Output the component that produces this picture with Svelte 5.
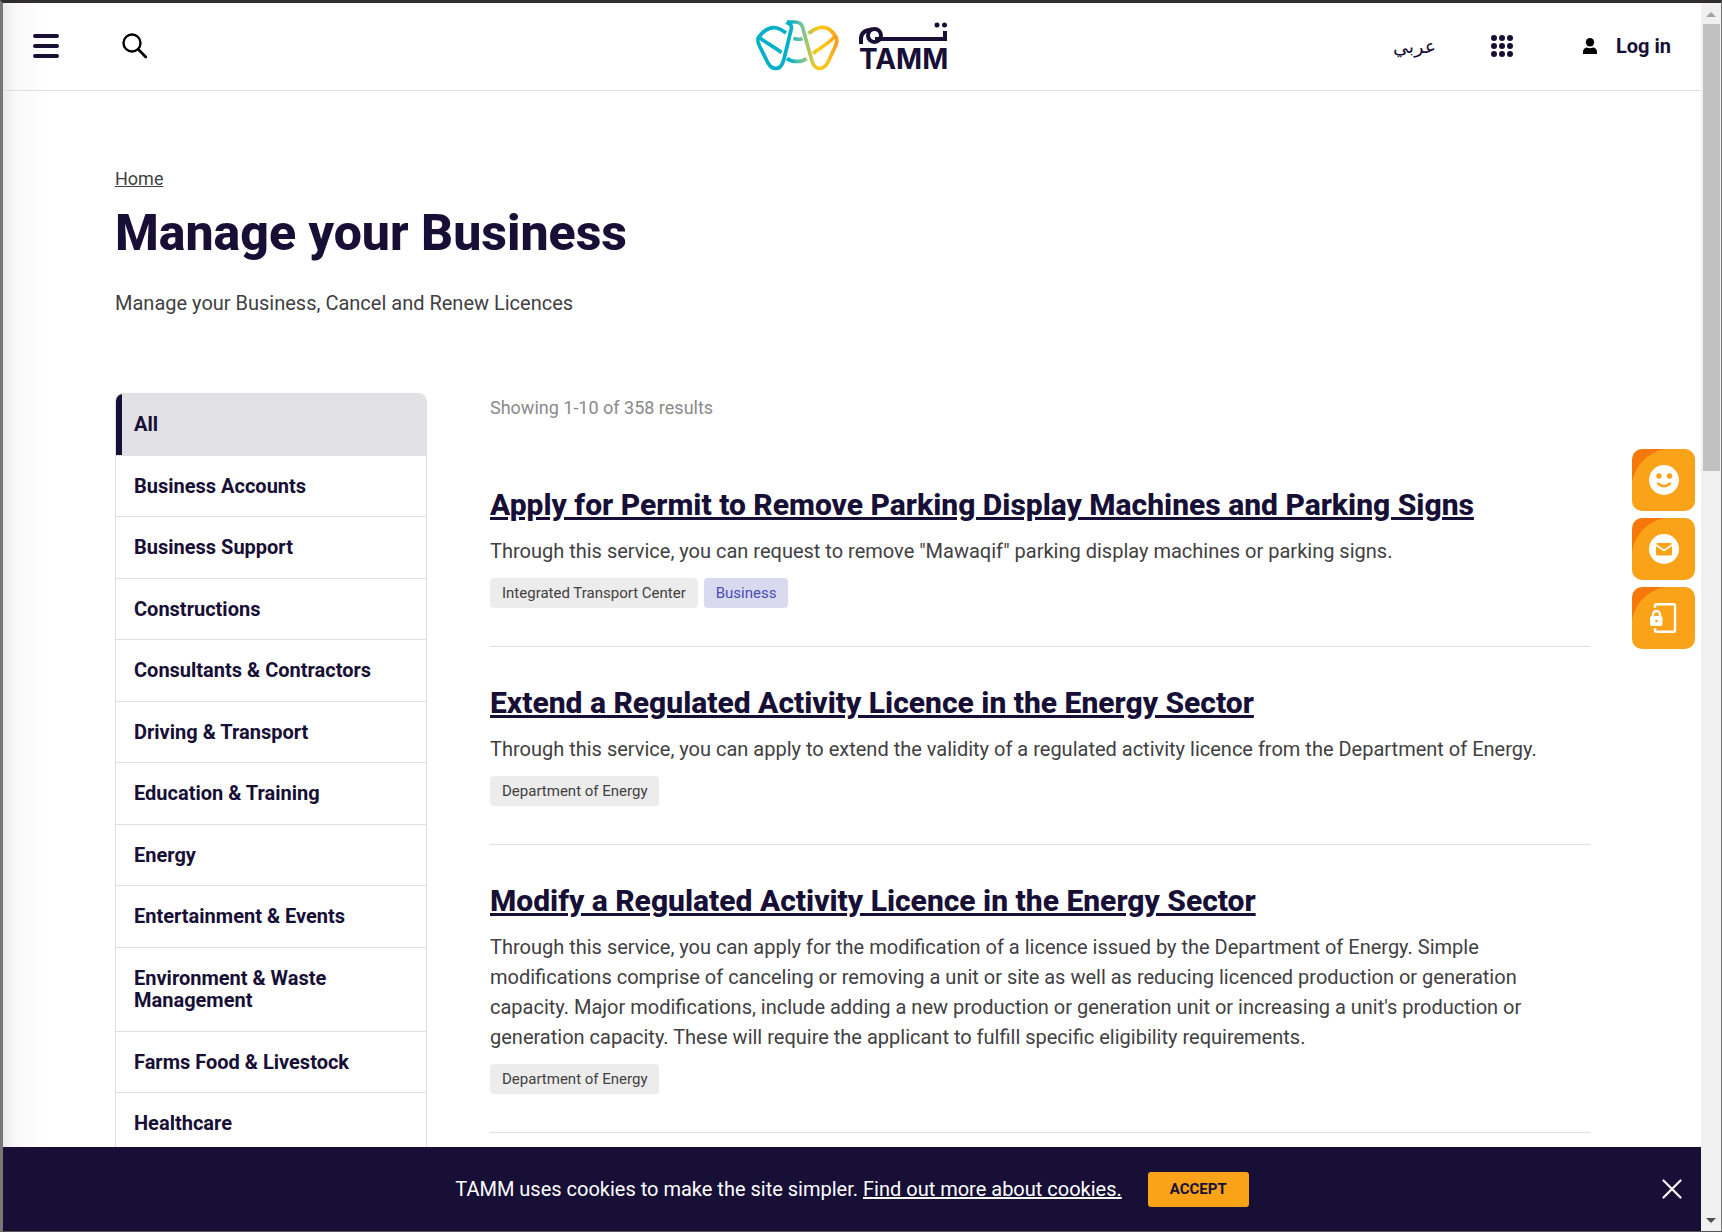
<script lang="ts">
  const categories = [
    'All',
    'Business Accounts',
    'Business Support',
    'Constructions',
    'Consultants & Contractors',
    'Driving & Transport',
    'Education & Training',
    'Energy',
    'Entertainment & Events',
    'Environment & Waste Management',
    'Farms Food & Livestock',
    'Healthcare',
  ];
  let active = $state('All');
  let cookiesOpen = $state(true);

  const services = [
    {
      title: 'Apply for Permit to Remove Parking Display Machines and Parking Signs',
      text: 'Through this service, you can request to remove "Mawaqif" parking display machines or parking signs.',
      entity: 'Integrated Transport Center',
      topic: 'Business',
    },
    {
      title: 'Extend a Regulated Activity Licence in the Energy Sector',
      text: 'Through this service, you can apply to extend the validity of a regulated activity licence from the Department of Energy.',
      entity: 'Department of Energy',
    },
    {
      title: 'Modify a Regulated Activity Licence in the Energy Sector',
      text: "Through this service, you can apply for the modification of a licence issued by the Department of Energy. Simple modifications comprise of canceling or removing a unit or site as well as reducing licenced production or generation capacity. Major modifications, include adding a new production or generation unit or increasing a unit's production or generation capacity. These will require the applicant to fulfill specific eligibility requirements.",
      entity: 'Department of Energy',
    },
  ];
  const dots = [4, 12, 20];
</script>

<div class="window">
  <div class="page">
    <header>
      <div class="side">
        <button class="icon" aria-label="Menu">
          <svg width="26" height="24" viewBox="0 0 26 24" stroke="#170f36" stroke-width="4" stroke-linecap="round"><path d="M2 2H24M2 12H24M2 22H24" /></svg>
        </button>
        <button class="icon" aria-label="Search">
          <svg width="26" height="26" viewBox="0 0 26 26" fill="none" stroke="#000" stroke-linecap="round"><circle cx="10" cy="10" r="8.5" stroke-width="2.4" /><path d="M16.4 16.6L23.8 24" stroke-width="2.8" /></svg>
        </button>
      </div>
      <a class="logo" href="#home" aria-label="TAMM home">
        <svg width="194" height="60" viewBox="0 0 194 60">
          <defs>
            <linearGradient id="wing" gradientUnits="userSpaceOnUse" x1="0" y1="0" x2="84" y2="0">
              <stop offset="0.42" stop-color="#00b1c9" />
              <stop offset="0.55" stop-color="#6fc3a0" />
              <stop offset="0.74" stop-color="#fcc917" />
              <stop offset="0.86" stop-color="#fbc21a" />
              <stop offset="1" stop-color="#f7931e" />
            </linearGradient>
          </defs>
          <g fill="none" stroke="url(#wing)" stroke-width="3.7" stroke-linejoin="round">
            <path d="M32 6H40C44.500 6 46.500 7.500 47.500 11L57 45C58.500 50 61 52.500 64.500 52.500C68.500 52.500 71 50 73 46L79.500 32C82 26.500 83 23 80 19.500C76 13 71 10.500 65 11.500C60.500 12.500 57 14.500 53.500 17.500" />
            <path d="M32 6C33 8.500 37 7.500 36.500 12L29 43C27.500 49 25.500 52.500 21 52.500C17.500 52.500 15 50.500 13 47L4.500 30C2 25 2 22 5.500 19C11 12.500 16 10.500 22 12C26 13 28 14.500 31 17" />
            <path d="M5 22C10 26 19 31 26.500 36.500M80 20C75 27 66 31 58 37.500" />
            <path d="M38.500 22.500C42 23.500 45 23.500 47.500 22.500M32 42.500C37 46.500 47 46.500 51.500 42.500" />
          </g>
          <g fill="none" stroke="#170f36" stroke-width="4">
            <circle cx="119.500" cy="19.500" r="6.500" />
            <path d="M106 28V23C106 17 110 14 117 13.500M120 23H190V15" />
          </g>
          <g fill="#170f36"><circle cx="182" cy="9" r="2.500" /><circle cx="189.500" cy="9" r="2.500" /></g>
          <text x="104" y="53" class="word">TAMM</text>
        </svg>
      </a>
      <div class="side end">
        <a class="arabic" href="#ar" lang="ar">عربي</a>
        <button class="icon apps" aria-label="Applications">
          <svg width="24" height="24" viewBox="0 0 24 24" fill="#170f36">
            {#each dots as y}{#each dots as x}<circle cx={x} cy={y} r="3" />{/each}{/each}
          </svg>
        </button>
        <a class="login" href="#login">
          <svg width="14" height="16" viewBox="0 0 14 16"><circle cx="7" cy="4.200" r="4.200" /><path d="M0 16V14C0 11 2 9.500 4 9.500Q7 11 10 9.500C12 9.500 14 11 14 14V16Z" /></svg>
          Log in
        </a>
      </div>
    </header>

    <main>
      <nav class="crumbs" aria-label="Breadcrumb"><a href="#home">Home</a></nav>
      <h1>Manage your Business</h1>
      <p class="lead">Manage your Business, Cancel and Renew Licences</p>

      <div class="columns">
        <nav class="categories" aria-label="Categories">
          {#each categories as name}
            <button class:active={active === name} onclick={() => (active = name)}>{name}</button>
          {/each}
        </nav>
        <section class="results">
          <p class="count">Showing 1-10 of 358 results</p>
          {#each services as s}
            <article>
              <h2><a href="#service">{s.title}</a></h2>
              <p>{s.text}</p>
              <div class="tags">
                <span class="tag">{s.entity}</span>
                {#if s.topic}<span class="tag topic">{s.topic}</span>{/if}
              </div>
            </article>
          {/each}
        </section>
      </div>
    </main>

    <aside class="quick">
      <button aria-label="Feedback">
        <svg width="30" height="30" viewBox="0 0 30 30"><circle cx="15" cy="15" r="15" fill="#fff" /><g fill="#faa318"><circle cx="10" cy="11" r="2.700" /><circle cx="20.500" cy="11" r="2.700" /></g><path d="M9 18.500Q15 24 21 18.500" fill="none" stroke="#faa318" stroke-width="2.400" stroke-linecap="round" /></svg>
      </button>
      <button aria-label="Contact">
        <svg width="30" height="30" viewBox="0 0 30 30"><circle cx="15" cy="15" r="15" fill="#fff" /><rect x="7" y="9" width="16" height="12.500" rx="1.500" fill="#faa318" /><path d="M7 11L15 16.500L23 11" fill="none" stroke="#fff" stroke-width="1.600" /></svg>
      </button>
      <button aria-label="Secure sign-in">
        <svg width="30" height="30" viewBox="0 0 30 30" fill="none" stroke="#fff"><path d="M6 5V2.500Q6 1.200 7.500 1.200H24.500Q26 1.200 26 2.500V27.500Q26 28.800 24.500 28.800H7.500Q6 28.800 6 27.500V25" stroke-width="2.400" /><path d="M4 14V11.500A3.500 3.500 0 0 1 11 11.500V14" stroke-width="2.400" /><rect x="1" y="13" width="12.500" height="10" rx="2" fill="#fff" stroke="none" /><circle cx="7.500" cy="18" r="1.300" fill="#faa318" stroke="none" /></svg>
      </button>
    </aside>

    {#if cookiesOpen}
      <footer>
        <p>TAMM uses cookies to make the site simpler. <a href="#cookies">Find out more about cookies.</a></p>
        <button class="accept" onclick={() => (cookiesOpen = false)}>ACCEPT</button>
        <button class="close" aria-label="Close" onclick={() => (cookiesOpen = false)}>
          <svg width="20" height="20" viewBox="0 0 20 20" stroke="#fff" stroke-width="2.200" stroke-linecap="round"><path d="M1.500 1.500L18.500 18.500M18.500 1.500L1.500 18.500" /></svg>
        </button>
      </footer>
    {/if}
  </div>

  <div class="scrollbar" aria-hidden="true">
    <svg class="up" width="10" height="6" viewBox="0 0 10 6"><path d="M0 5L5 0L10 5Z" fill="#a3a3a3" /></svg>
    <div class="track"><div class="thumb"></div></div>
    <svg width="10" height="6" viewBox="0 0 10 6"><path d="M0 0H10L5 5Z" fill="#505050" /></svg>
  </div>
</div>

<style>
  .window, .window * { box-sizing: border-box; }
  .window {
    display: flex;
    height: 100vh;
    overflow: hidden;
    border-top: 3px solid #302e2f;
    border-left: 3px solid #777;
    border-right: 1px solid #777;
    border-bottom: 1px solid #555;
    background: #fff;
    color: #414042;
    font-family: Roboto, "Liberation Sans", "DejaVu Sans", sans-serif;
    font-size: 20px;
  }
  h1, h2, p { margin: 0; }
  a { color: inherit; }
  button {
    border: 0;
    background: none;
    padding: 0;
    color: inherit;
    font-family: inherit;
    cursor: pointer;
  }
  svg { display: block; flex: none; }
  .page {
    position: relative;
    flex: 1;
    min-width: 0;
    display: flex;
    flex-direction: column;
    background: linear-gradient(90deg, #ebebeb 0, #f8f8f8 12px, #fdfdfd 30px, #fff 50px);
  }
  header {
    flex: none;
    display: flex;
    align-items: center;
    padding: 0 30px 2px;
    height: 88px;
    border-bottom: 1px solid #dfdfdf;
  }
  .side { flex: 1; display: flex; align-items: center; gap: 63px; }
  .end { justify-content: flex-end; gap: 54px; }
  .arabic {
    color: #170f36;
    text-decoration: none;
    font-family: "DejaVu Sans", sans-serif;
    font-size: 19px;
  }
  .login {
    display: flex;
    align-items: center;
    gap: 19px;
    margin-left: 15px;
    color: #170f36;
    font-weight: 700;
    text-decoration: none;
  }
  .word { font: 700 28px Inter, sans-serif; fill: #170f36; }
  main { flex: 1; min-height: 0; overflow: hidden; padding: 74px 111px 0 112px; }
  .crumbs { font-size: 18px; line-height: 28px; }
  h1 {
    margin-top: 10px;
    color: #170f36;
    font-size: 50px;
    line-height: 60px;
    font-weight: 800;
  }
  .lead { margin-top: 25px; line-height: 30px; }
  .columns {
    display: grid;
    grid-template-columns: 312px minmax(0, 1fr);
    gap: 63px;
    align-items: start;
    margin-top: 75px;
  }
  .categories {
    display: flex;
    flex-direction: column;
    overflow: hidden;
    border: 1px solid #dfdfdf;
    border-radius: 8px;
  }
  .categories button {
    padding: 19px 18px;
    border-bottom: 1px solid #dfdfdf;
    color: #170f36;
    font-size: 20px;
    font-weight: 700;
    line-height: 1.125;
    text-align: left;
  }
  .categories .active { background: #e2e1e6; box-shadow: inset 6px 0 #170f36; }
  .count { margin-bottom: 26px; color: #8a8a8c; font-size: 18px; line-height: 30px; }
  article { padding: 38px 0; border-bottom: 1px solid #dfdfdf; }
  h2 { margin-bottom: 13px; color: #170f36; font-size: 30px; line-height: 36px; font-weight: 800; }
  article p { line-height: 30px; }
  .tags { display: flex; gap: 6px; margin-top: 12px; }
  .tag {
    padding: 0 12px;
    border-radius: 4px;
    background: #ececec;
    font-size: 15px;
    line-height: 30px;
  }
  .topic { background: #d9daf0; color: #4a4bb5; }
  .quick {
    position: absolute;
    top: 446px;
    right: 6px;
    display: flex;
    flex-direction: column;
    gap: 7px;
  }
  .quick button {
    display: grid;
    place-items: center;
    width: 63px;
    height: 62px;
    border-radius: 10px;
    background: radial-gradient(circle at 40px 40px, #faa318 40px, #f7780a 41px) 0 0 / 40px 40px no-repeat, #faa318;
  }
  footer {
    position: relative;
    flex: none;
    display: flex;
    align-items: center;
    justify-content: center;
    gap: 26px;
    height: 84px;
    background: #170f36;
    color: #fff;
  }
  .accept {
    padding: 0 22px;
    border-radius: 3px;
    background: #faa318;
    color: #170f36;
    font-size: 15px;
    font-weight: 700;
    line-height: 35px;
  }
  .close { position: absolute; right: 19px; }
  .scrollbar {
    flex: none;
    display: flex;
    flex-direction: column;
    align-items: center;
    gap: 6px;
    width: 20px;
    padding: 9px 0 7px;
    background: #f0f0f0;
  }
  .track { flex: 1; width: 17px; }
  .thumb { height: 37.6%; background: #c1c1c1; }
</style>
